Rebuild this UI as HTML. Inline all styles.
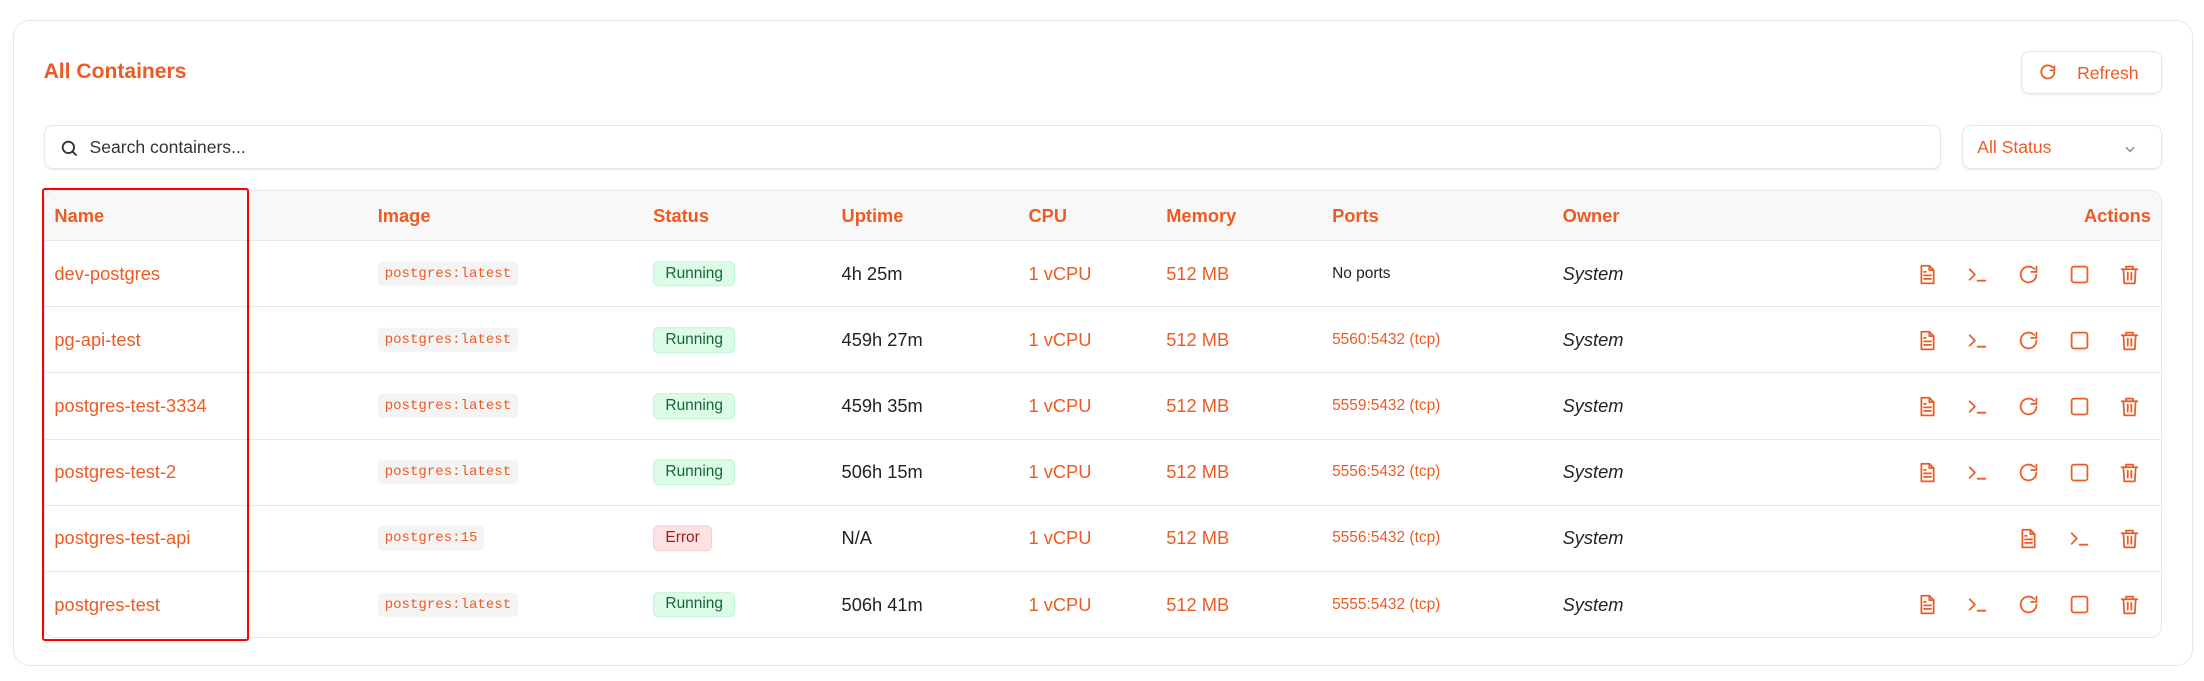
<!DOCTYPE html>
<html><head><meta charset="utf-8"><style>
*{box-sizing:border-box;margin:0;padding:0}
html,body{width:2204px;height:681px;background:#fff;overflow:hidden}
#z{zoom:1.4056;width:1568px;height:485px;position:relative;font-family:"Liberation Sans",sans-serif;color:#ec5b24}
.card{position:absolute;left:9px;top:14px;width:1551px;height:460px;border:1px solid #e5e7eb;border-radius:12px;background:#fff}
.title{position:absolute;left:31px;top:43px;font-size:15px;font-weight:bold}
.btn{position:absolute;left:1438px;top:36px;width:100px;height:31px;border:1px solid #e5e7eb;border-radius:6px;box-shadow:0 1px 2px rgba(0,0,0,.06);font-size:12.5px}
.btn svg{position:absolute;left:11px;top:8px}
.btn span{position:absolute;left:39px;top:8px}
.search{position:absolute;left:31px;top:89px;width:1350px;height:31px;border:1px solid #e5e7eb;border-radius:6px;box-shadow:0 1px 2px rgba(0,0,0,.06)}
.search svg{position:absolute;left:11px;top:9px}
.search span{position:absolute;left:32px;top:8px;font-size:12.5px;color:#333}
.sel{position:absolute;left:1396px;top:89px;width:142px;height:31px;border:1px solid #e5e7eb;border-radius:6px;box-shadow:0 1px 2px rgba(0,0,0,.06);font-size:12.5px}
.sel span{position:absolute;left:10px;top:8px}
.sel svg{position:absolute;left:114px;top:11px}
.tbl{position:absolute;left:31px;top:135px;width:1507px;height:319px;border:1px solid #e5e7eb;border-radius:8px;overflow:hidden}
.hd{position:absolute;left:0;top:0;width:100%;height:36px;background:#f8f8f8;border-bottom:1px solid #e5e7eb;font-weight:bold;font-size:13px}
.row{position:absolute;left:0;width:100%;height:47px;border-bottom:1px solid #e5e7eb;font-size:13px}
.c{position:absolute;top:50%;transform:translateY(-50%);white-space:nowrap}
.hd .c{top:18px}
.img{font-family:"Liberation Mono",monospace;font-size:10px;background:#f4f4f4;border-radius:3px;padding:3px 5px}
.run{font-size:11px;background:#dcfce7;border:1px solid #bbf7d0;color:#166534;border-radius:4px;padding:2px 8px}
.err{font-size:11px;background:#fee2e2;border:1px solid #fecaca;color:#991b1b;border-radius:4px;padding:2px 8px}
.dk{color:#222}
.po{font-size:11px}
.own{font-style:italic;color:#222}
.ic{position:absolute;top:16px}
.red{position:absolute;left:30px;top:134px;width:147px;height:322px;border:2px solid #f00;border-radius:2px}
</style></head><body><div id="z">
<div class="card"></div>
<div class="title">All Containers</div>
<div class="btn"><svg width="14" height="14" viewBox="0 0 24 24" fill="none" stroke="#ec5b24" stroke-width="2.2" stroke-linecap="round"><path d="M20 11a8 8 0 1 1-2.3-5.7"/><path d="M20 4v5h-5"/></svg><span>Refresh</span></div>
<div class="search"><svg width="13" height="13" viewBox="0 0 24 24" fill="none" stroke="#333" stroke-width="2.4" stroke-linecap="round"><circle cx="11" cy="11" r="7.5"/><path d="M21 21l-4.5-4.5"/></svg><span>Search containers...</span></div>
<div class="sel"><span>All Status</span><svg width="10" height="10" viewBox="0 0 24 24" fill="none" stroke="#888" stroke-width="2.5"><path d="M5 9l7 7 7-7"/></svg></div>
<div class="tbl">
<div class="hd">
<span class="c" style="left:7px">Name</span><span class="c" style="left:237px">Image</span><span class="c" style="left:433px">Status</span><span class="c" style="left:567px">Uptime</span><span class="c" style="left:700px">CPU</span><span class="c" style="left:798px">Memory</span><span class="c" style="left:916px">Ports</span><span class="c" style="left:1080px">Owner</span><span class="c" style="right:7px">Actions</span>
</div>
<svg width="0" height="0" style="position:absolute"><defs>
<g id="doc" fill="none" stroke="#ec5b24" stroke-width="2" stroke-linejoin="round" stroke-linecap="round"><path d="M5 2h9l5 5v15H5z"/><path d="M14 2v5h5M8 13h8M8 17h8M8 9h2"/></g>
<g id="term" fill="none" stroke="#ec5b24" stroke-width="2" stroke-linecap="round" stroke-linejoin="round"><path d="M3 6l6 6-6 6M12 19h9"/></g>
<g id="ref" fill="none" stroke="#ec5b24" stroke-width="2" stroke-linecap="round"><path d="M21 12a9 9 0 1 1-2.6-6.4"/><path d="M21 3v6h-6"/></g>
<g id="sq" fill="none" stroke="#ec5b24" stroke-width="2"><rect x="3" y="3" width="18" height="18" rx="2.5"/></g>
<g id="tr" fill="none" stroke="#ec5b24" stroke-width="2" stroke-linecap="round" stroke-linejoin="round"><path d="M3 6h18M8 6V3h8v3M5 6l1 16h12l1-16M10 10v8M14 10v8"/></g>
</defs></svg>
<div class="row" style="top:36px"><span class="c" style="left:7px">dev-postgres</span><span class="c img" style="left:237px">postgres:latest</span><span class="c run" style="left:433px">Running</span><span class="c dk" style="left:567px">4h 25m</span><span class="c" style="left:700px">1 vCPU</span><span class="c" style="left:798px">512 MB</span><span class="c po dk" style="left:916px">No ports</span><span class="c own" style="left:1080px">System</span>
<svg class="ic" style="left:1332px" width="15" height="15" viewBox="0 0 24 24"><use href="#doc"/></svg><svg class="ic" style="left:1368px" width="15" height="15" viewBox="0 0 24 24"><use href="#term"/></svg><svg class="ic" style="left:1404px" width="15" height="15" viewBox="0 0 24 24"><use href="#ref"/></svg><svg class="ic" style="left:1440px" width="15" height="15" viewBox="0 0 24 24"><use href="#sq"/></svg><svg class="ic" style="left:1476px" width="15" height="15" viewBox="0 0 24 24"><use href="#tr"/></svg></div>
<div class="row" style="top:83px"><span class="c" style="left:7px">pg-api-test</span><span class="c img" style="left:237px">postgres:latest</span><span class="c run" style="left:433px">Running</span><span class="c dk" style="left:567px">459h 27m</span><span class="c" style="left:700px">1 vCPU</span><span class="c" style="left:798px">512 MB</span><span class="c po" style="left:916px">5560:5432 (tcp)</span><span class="c own" style="left:1080px">System</span>
<svg class="ic" style="left:1332px" width="15" height="15" viewBox="0 0 24 24"><use href="#doc"/></svg><svg class="ic" style="left:1368px" width="15" height="15" viewBox="0 0 24 24"><use href="#term"/></svg><svg class="ic" style="left:1404px" width="15" height="15" viewBox="0 0 24 24"><use href="#ref"/></svg><svg class="ic" style="left:1440px" width="15" height="15" viewBox="0 0 24 24"><use href="#sq"/></svg><svg class="ic" style="left:1476px" width="15" height="15" viewBox="0 0 24 24"><use href="#tr"/></svg></div>
<div class="row" style="top:130px"><span class="c" style="left:7px">postgres-test-3334</span><span class="c img" style="left:237px">postgres:latest</span><span class="c run" style="left:433px">Running</span><span class="c dk" style="left:567px">459h 35m</span><span class="c" style="left:700px">1 vCPU</span><span class="c" style="left:798px">512 MB</span><span class="c po" style="left:916px">5559:5432 (tcp)</span><span class="c own" style="left:1080px">System</span>
<svg class="ic" style="left:1332px" width="15" height="15" viewBox="0 0 24 24"><use href="#doc"/></svg><svg class="ic" style="left:1368px" width="15" height="15" viewBox="0 0 24 24"><use href="#term"/></svg><svg class="ic" style="left:1404px" width="15" height="15" viewBox="0 0 24 24"><use href="#ref"/></svg><svg class="ic" style="left:1440px" width="15" height="15" viewBox="0 0 24 24"><use href="#sq"/></svg><svg class="ic" style="left:1476px" width="15" height="15" viewBox="0 0 24 24"><use href="#tr"/></svg></div>
<div class="row" style="top:177px"><span class="c" style="left:7px">postgres-test-2</span><span class="c img" style="left:237px">postgres:latest</span><span class="c run" style="left:433px">Running</span><span class="c dk" style="left:567px">506h 15m</span><span class="c" style="left:700px">1 vCPU</span><span class="c" style="left:798px">512 MB</span><span class="c po" style="left:916px">5556:5432 (tcp)</span><span class="c own" style="left:1080px">System</span>
<svg class="ic" style="left:1332px" width="15" height="15" viewBox="0 0 24 24"><use href="#doc"/></svg><svg class="ic" style="left:1368px" width="15" height="15" viewBox="0 0 24 24"><use href="#term"/></svg><svg class="ic" style="left:1404px" width="15" height="15" viewBox="0 0 24 24"><use href="#ref"/></svg><svg class="ic" style="left:1440px" width="15" height="15" viewBox="0 0 24 24"><use href="#sq"/></svg><svg class="ic" style="left:1476px" width="15" height="15" viewBox="0 0 24 24"><use href="#tr"/></svg></div>
<div class="row" style="top:224px"><span class="c" style="left:7px">postgres-test-api</span><span class="c img" style="left:237px">postgres:15</span><span class="c err" style="left:433px">Error</span><span class="c dk" style="left:567px">N/A</span><span class="c" style="left:700px">1 vCPU</span><span class="c" style="left:798px">512 MB</span><span class="c po" style="left:916px">5556:5432 (tcp)</span><span class="c own" style="left:1080px">System</span>
<svg class="ic" style="left:1404px" width="15" height="15" viewBox="0 0 24 24"><use href="#doc"/></svg><svg class="ic" style="left:1440px" width="15" height="15" viewBox="0 0 24 24"><use href="#term"/></svg><svg class="ic" style="left:1476px" width="15" height="15" viewBox="0 0 24 24"><use href="#tr"/></svg></div>
<div class="row" style="top:271px;border-bottom:none"><span class="c" style="left:7px">postgres-test</span><span class="c img" style="left:237px">postgres:latest</span><span class="c run" style="left:433px">Running</span><span class="c dk" style="left:567px">506h 41m</span><span class="c" style="left:700px">1 vCPU</span><span class="c" style="left:798px">512 MB</span><span class="c po" style="left:916px">5555:5432 (tcp)</span><span class="c own" style="left:1080px">System</span>
<svg class="ic" style="left:1332px" width="15" height="15" viewBox="0 0 24 24"><use href="#doc"/></svg><svg class="ic" style="left:1368px" width="15" height="15" viewBox="0 0 24 24"><use href="#term"/></svg><svg class="ic" style="left:1404px" width="15" height="15" viewBox="0 0 24 24"><use href="#ref"/></svg><svg class="ic" style="left:1440px" width="15" height="15" viewBox="0 0 24 24"><use href="#sq"/></svg><svg class="ic" style="left:1476px" width="15" height="15" viewBox="0 0 24 24"><use href="#tr"/></svg></div>
</div>
<div class="red"></div>
</div></body></html>
